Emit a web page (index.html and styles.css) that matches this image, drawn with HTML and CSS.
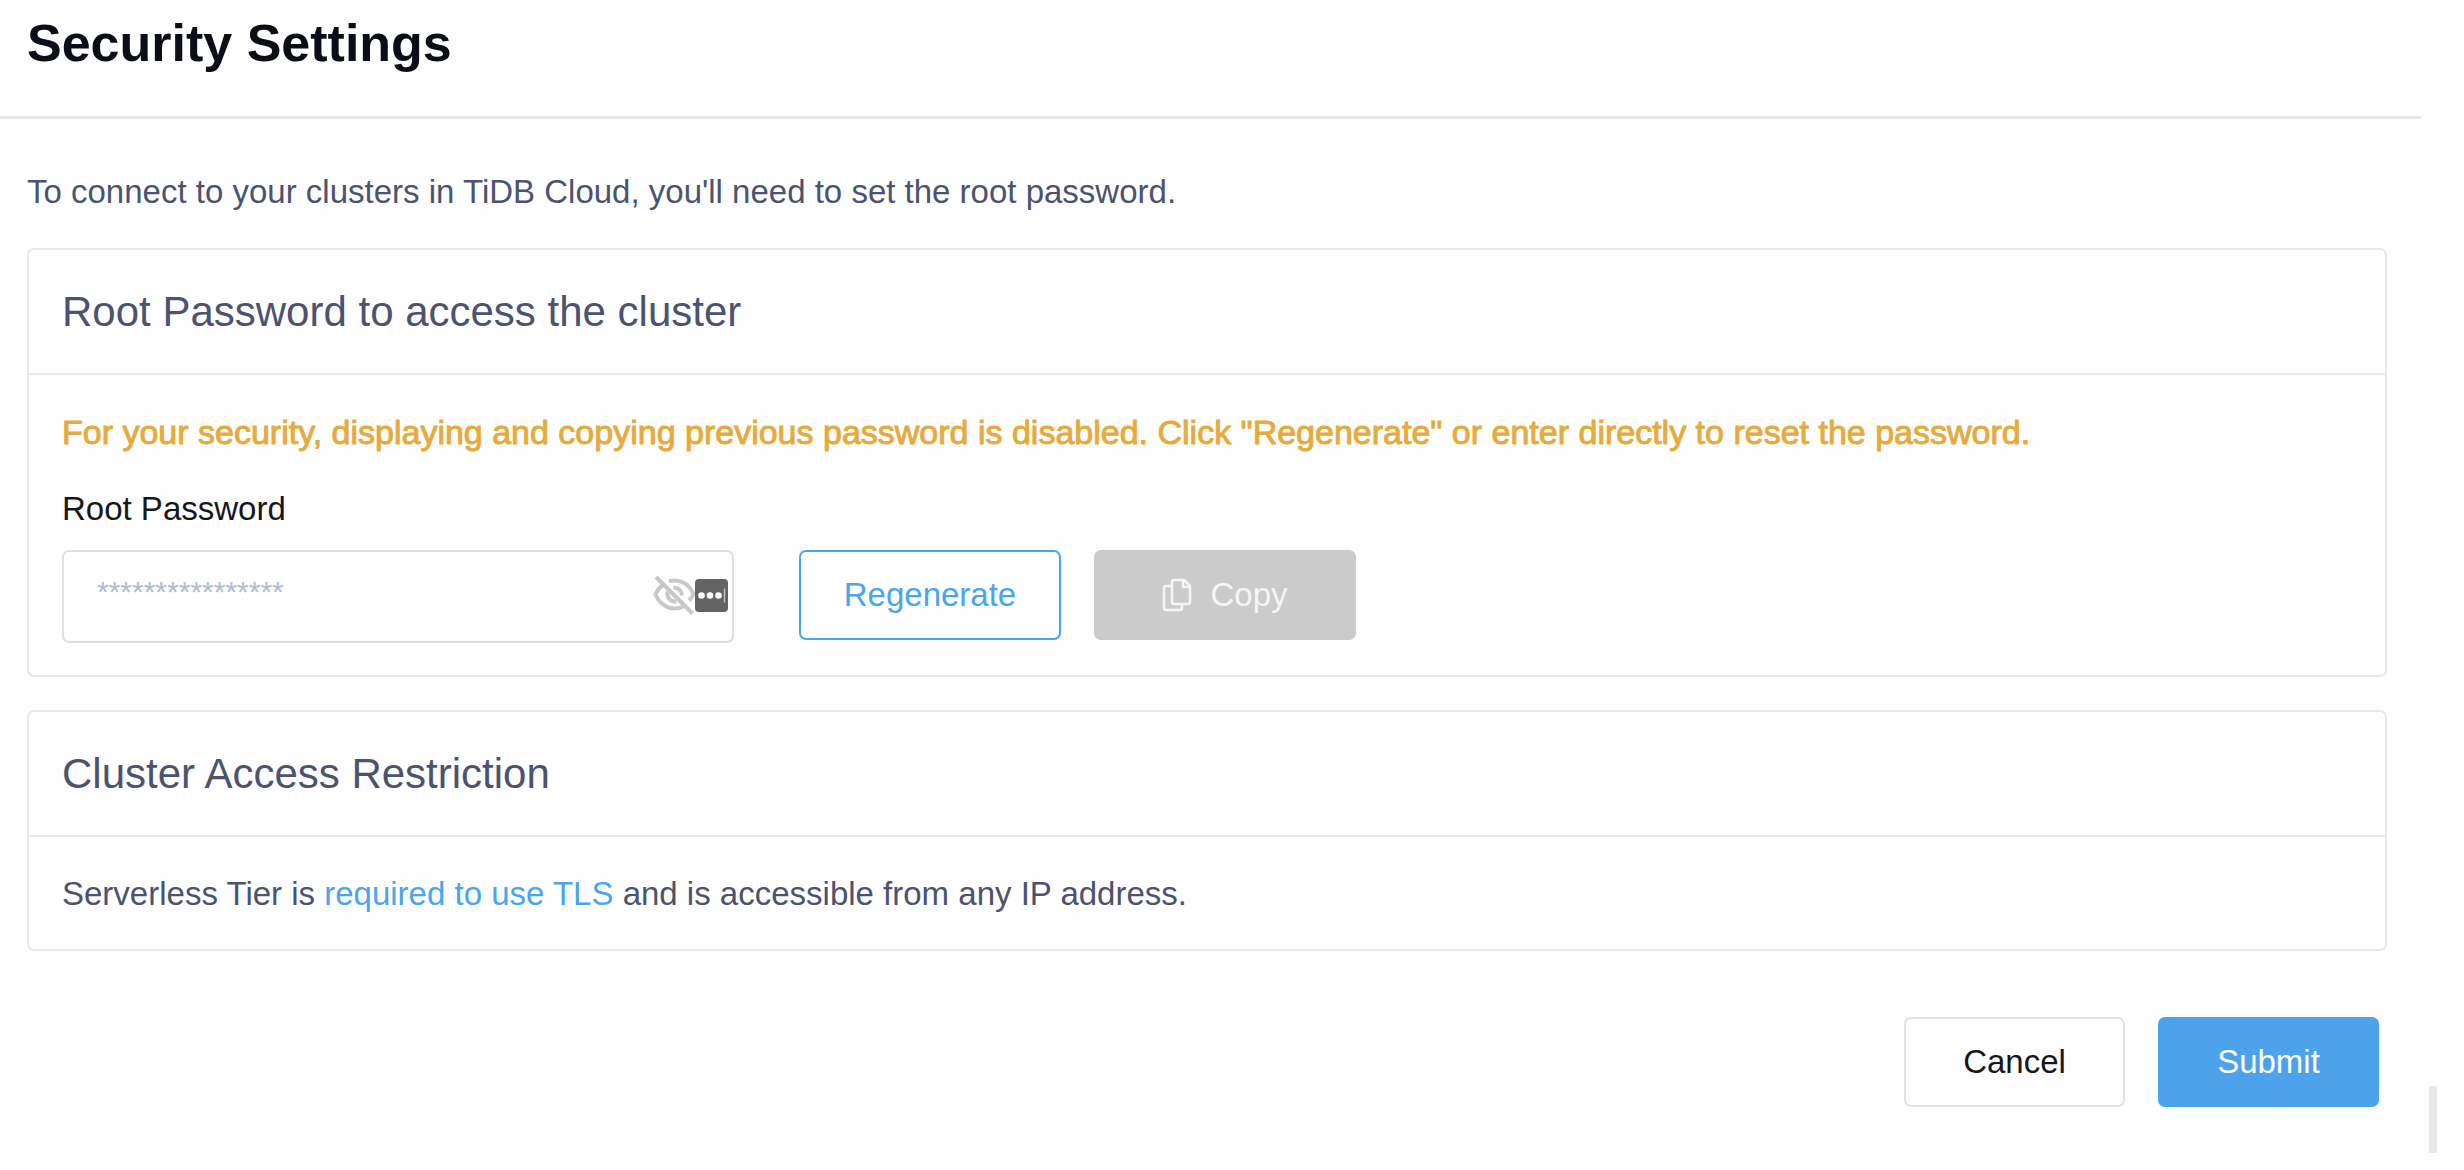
FILE: index.html
```html
<!DOCTYPE html>
<html lang="en">
<head>
<meta charset="utf-8">
<meta name="viewport" content="width=device-width, initial-scale=1">
<title>Security Settings</title>
<link rel="stylesheet" href="styles.css">
</head>
<body>
<main class="dialog">
  <header class="dialog-header">
    <h1 class="dialog-title">Security Settings</h1>
  </header>
  <form class="dialog-body">
    <p class="intro">To connect to your clusters in TiDB Cloud, you'll need to set the root password.</p>

    <section class="card">
      <h2 class="card-title">Root Password to access the cluster</h2>
      <div class="card-body card-body-form">
        <p class="warning">For your security, displaying and copying previous password is disabled. Click "Regenerate" or enter directly to reset the password.</p>
        <label class="label" for="root-password">Root Password</label>
        <div class="password-row">
          <div class="field">
            <input class="input" id="root-password" type="password" placeholder="****************">
            <div class="field-icons">
              <svg class="eye" viewBox="0 0 42 40" fill="none" stroke="#c8c8c8" stroke-width="4" aria-hidden="true">
                <path d="M16 6.300C27 3.500 36 9 40.500 19C39.500 21.500 38 23.700 36 25.500M10.500 9.500C7 12 4 15 2.500 19.500C8 32 20 36.500 30.500 31.500"/>
                <path d="M20.500 12.500C25 12.500 28.500 15.500 29 20.500M14.500 16.500C13.500 22 17 27 23.500 26.500"/>
                <path d="M3 2L39.500 38.500"/>
              </svg>
              <svg class="manager" viewBox="0 0 33 33" aria-hidden="true">
                <rect width="33" height="33" rx="4" fill="#636363"/>
                <circle cx="6.500" cy="16.500" r="3.300" fill="#fff"/>
                <circle cx="15" cy="16.500" r="3.300" fill="#fff"/>
                <circle cx="23.500" cy="16.500" r="3.300" fill="#fff"/>
                <path d="M29.500 9.500V23.500" stroke="#bdbdbd" stroke-width="1.500"/>
              </svg>
            </div>
          </div>
          <button class="button button-outline button-wide" type="button">Regenerate</button>
          <button class="button button-disabled button-wide" type="button" disabled>
            <svg class="copy-icon" viewBox="0 0 30 34" fill="none" stroke="#f5f5f5" stroke-width="2.500" stroke-linejoin="round" aria-hidden="true">
              <path d="M10 8H4Q2 8 2 10V30Q2 32 4 32H18Q20 32 20 30V26"/>
              <path d="M12 2H22L28 8V24Q28 26 26 26H12Q10 26 10 24V4Q10 2 12 2ZM21 2V9H28"/>
            </svg>
            Copy
          </button>
        </div>
      </div>
    </section>

    <section class="card">
      <h2 class="card-title">Cluster Access Restriction</h2>
      <div class="card-body">
        <p class="note">Serverless Tier is <a class="link" href="#tls">required to use TLS</a> and is accessible from any IP address.</p>
      </div>
    </section>

    <footer class="actions">
      <button class="button button-plain" type="button">Cancel</button>
      <button class="button button-primary" type="submit">Submit</button>
    </footer>
  </form>
</main>
<div class="scroll-thumb"></div>
</body>
</html>
```

FILE: styles.css
```css
* {
  box-sizing: border-box;
}

body {
  margin: 0;
  background: #fefefe;
  color: #4b5370;
  font-family: "Liberation Sans", Arial, sans-serif;
  font-size: 33px;
  line-height: 40px;
}

h1, h2, p {
  margin: 0;
}

.dialog {
  margin-right: 43px;
}

.dialog-header {
  padding: 14px 27px 43px;
  border-bottom: 3px solid #e8e8e8;
}

.dialog-title {
  color: #0c0e17;
  font-size: 52px;
  line-height: 59px;
}

.dialog-body {
  padding: 53px 34px 28px 27px;
}

.intro {
  margin-bottom: 36px;
}

.card {
  margin-bottom: 33px;
  border: 2px solid #e8e8e8;
  border-radius: 7px;
}

.card-title {
  padding: 38px 33px 37px;
  border-bottom: 2px solid #e8e8e8;
  font-size: 42px;
  font-weight: 400;
  line-height: 48px;
}

.card-body {
  padding: 37px 33px 35px;
}

.card-body-form {
  padding-bottom: 32px;
}

.warning {
  margin-bottom: 37px;
  color: #e6ab3e;
  font-size: 34px;
  -webkit-text-stroke: 1px #e6ab3e;
}

.label {
  display: block;
  margin-bottom: 21px;
  color: #16171d;
}

.password-row {
  display: flex;
  align-items: flex-start;
  gap: 33px;
}

.field {
  position: relative;
  width: 672px;
  margin-right: 32px;
}

.input {
  display: block;
  width: 100%;
  height: 93px;
  padding: 0 90px 10px 33px;
  border: 2px solid #dedede;
  border-radius: 7px;
  background: transparent;
  font-family: inherit;
  font-size: 30px;
}

.input::placeholder {
  color: #b3bccd;
  opacity: 1;
}

.field-icons {
  position: absolute;
  top: 25px;
  right: 6px;
  display: flex;
  align-items: center;
}

.eye {
  width: 42px;
  height: 40px;
}

.manager {
  width: 33px;
  height: 33px;
}

.button {
  display: flex;
  align-items: center;
  justify-content: center;
  width: 221px;
  height: 90px;
  padding: 0;
  border: 2px solid transparent;
  border-radius: 7px;
  font-family: inherit;
  font-size: 33px;
  line-height: 40px;
}

.button-wide {
  width: 262px;
}

.button-outline {
  border-color: #4aa5ee;
  background: transparent;
  color: #4aa5ee;
}

.button-disabled {
  gap: 18px;
  background: #cbcbcb;
  background-clip: border-box;
  color: #f5f5f5;
}

.copy-icon {
  width: 30px;
  height: 34px;
}

.button-plain {
  border-color: #e3e3e3;
  background: transparent;
  color: #16171d;
}

.button-primary {
  background: #4ca3ec;
  color: #fefefe;
}

.link {
  color: #4aa5ee;
  text-decoration: none;
}

.actions {
  display: flex;
  justify-content: flex-end;
  gap: 33px;
  margin-top: 66px;
  padding-right: 8px;
}

.scroll-thumb {
  position: absolute;
  right: 27px;
  bottom: 17px;
  width: 8px;
  height: 67px;
  background: #e8e8e8;
}
```
